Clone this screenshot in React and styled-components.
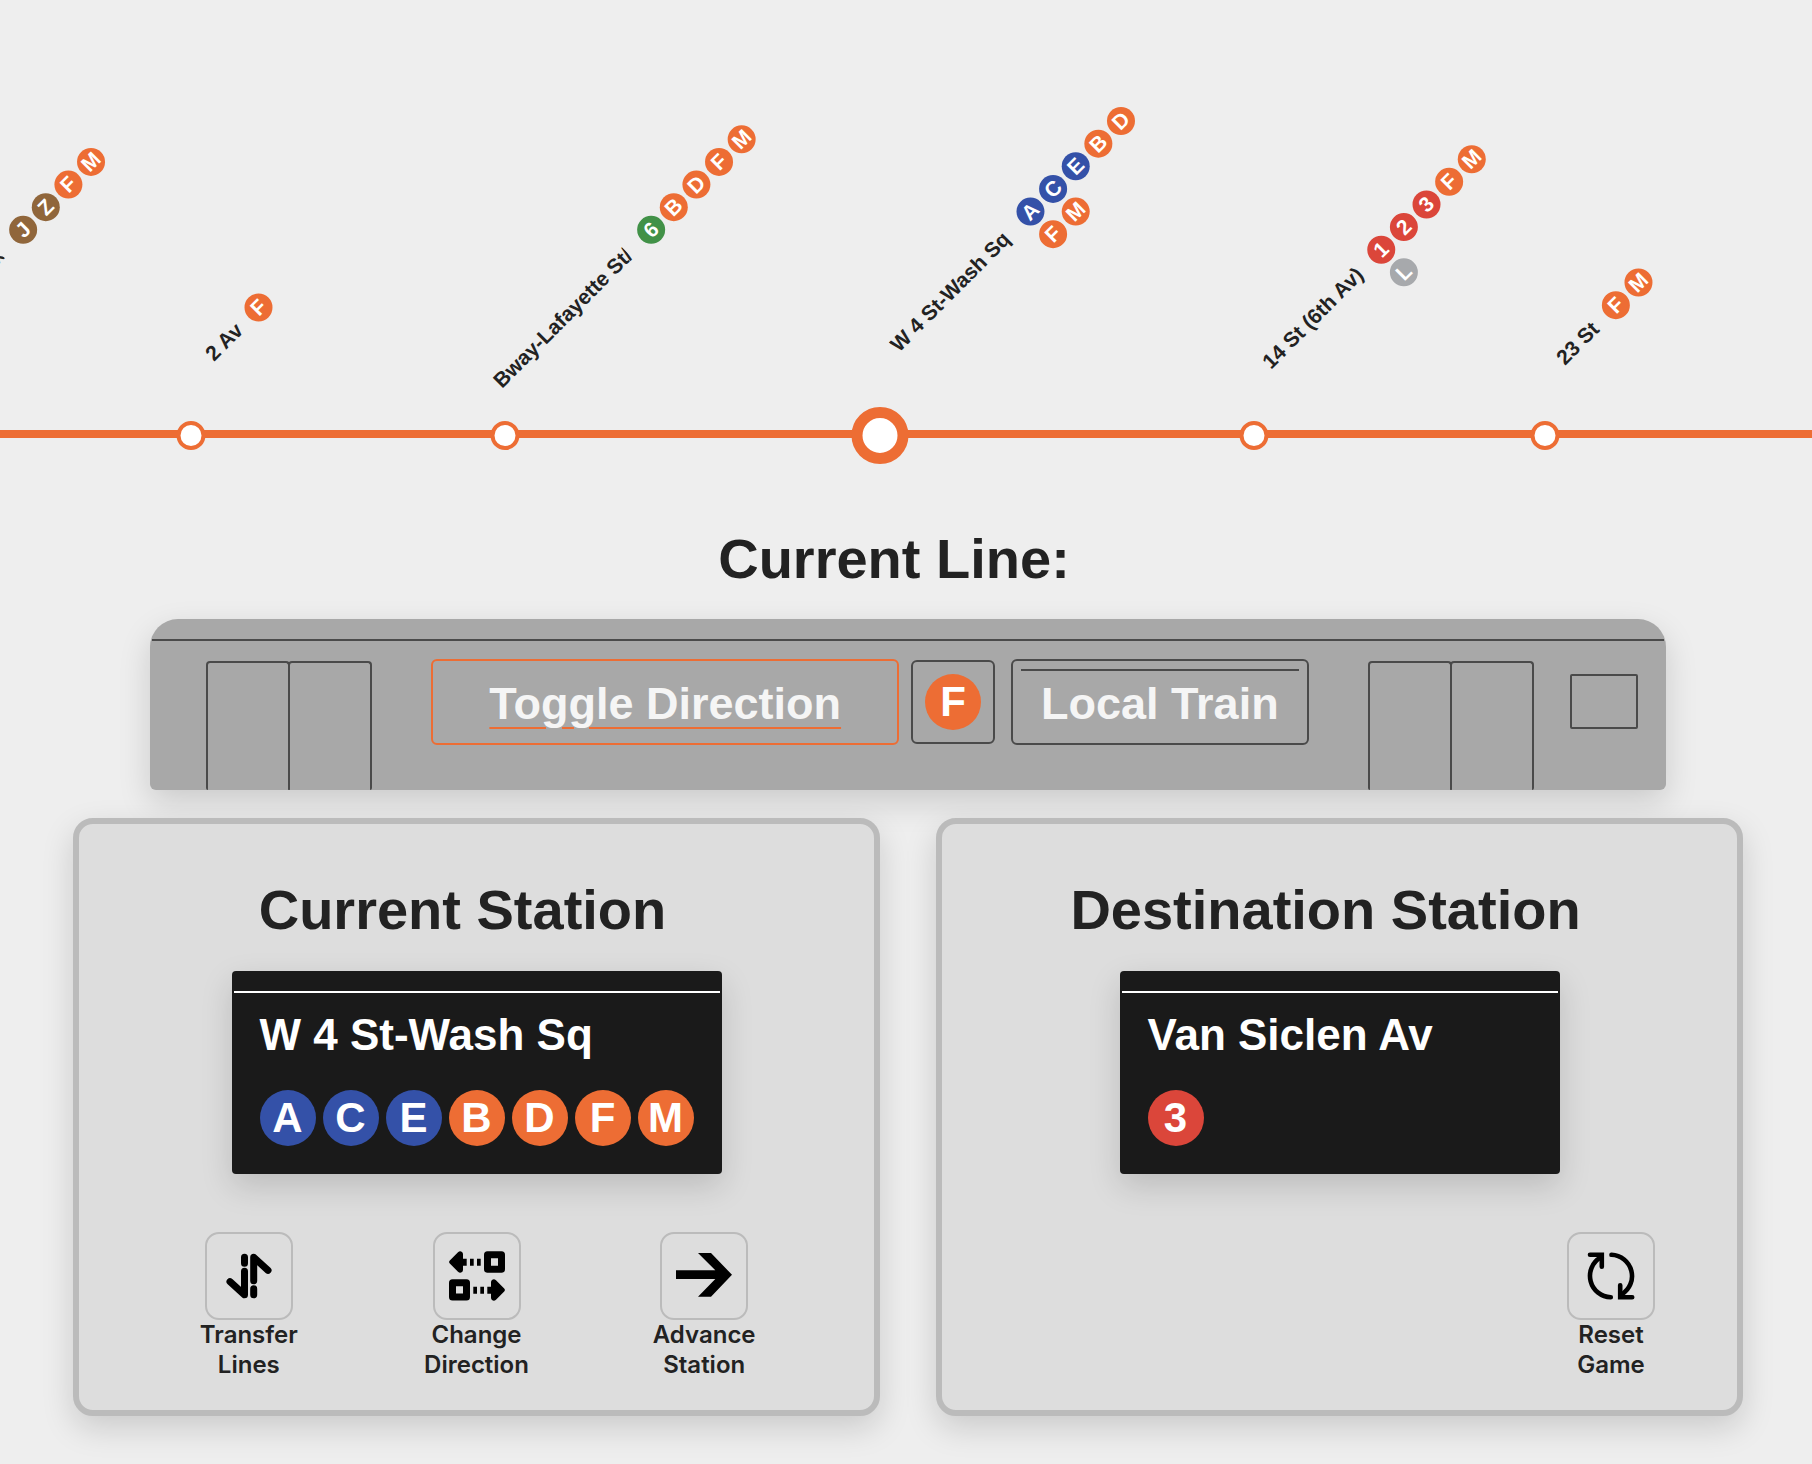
import React from "react";
import styled, { createGlobalStyle, css } from "styled-components";

const colors = {
  page: "#eeeeee",
  ink: "#222222",
  orange: "#ed6d34",
  blue: "#3451a8",
  red: "#db463a",
  green: "#419147",
  brown: "#90663b",
  grey: "#a7a9ac",
  steel: "#a8a8a8",
  seam: "#4a4a4a",
  panel: "#dddddd",
  edge: "#bbbbbb",
  sign: "#1a1a1a",
};

const routeColors = {
  1: colors.red, 2: colors.red, 3: colors.red,
  6: colors.green,
  A: colors.blue, C: colors.blue, E: colors.blue,
  B: colors.orange, D: colors.orange, F: colors.orange, M: colors.orange,
  J: colors.brown, Z: colors.brown,
  L: colors.grey,
};

// span: distance to the next stop; x / y: where the slanted label starts,
// measured from the stop's dot; reach: room for the name before its bullets.
const stops = [
  { name: "Delancey St-Essex", routes: "JZFM", span: 314, x: -8, y: -52, reach: 204 },
  { name: "2 Av", routes: "F", span: 314, x: 18, y: -79, reach: 56 },
  { name: "Bway-Lafayette St/", routes: "6BDFM", span: 375, x: -8, y: -52, reach: 204 },
  { name: "W 4 St-Wash Sq", routes: "ACEBDFM", span: 374, x: 14, y: -88, reach: 179, current: true },
  { name: "14 St (6th Av)", routes: "123FML", span: 291, x: 12, y: -71, reach: 149 },
  { name: "23 St", routes: "FM", span: 420, x: 15, y: -75, reach: 65 },
];

const GlobalStyle = createGlobalStyle`
  *, *::before, *::after { box-sizing: border-box; }
  body {
    margin: 0;
    background: ${colors.page};
    color: ${colors.ink};
    font-family: "Liberation Sans", Arial, sans-serif;
  }
`;

const shadow = css`
  box-shadow: 0 12px 32px rgba(0, 0, 0, 0.15);
`;

const Page = styled.main`
  padding-bottom: 48px;
`;

const LineMap = styled.section`
  overflow: hidden;
  padding-top: 407px;
`;

const Track = styled.div`
  position: relative;

  &::before {
    content: "";
    position: absolute;
    top: 23px;
    left: 0;
    width: 100%;
    height: 8px;
    background: ${colors.orange};
  }
`;

const StopList = styled.ol`
  display: flex;
  margin: 0 0 0 calc(50% - 1029px);
  padding: 0;
  list-style: none;
`;

const Stop = styled.li`
  position: relative;
  flex: 0 0 ${(p) => p.$span}px;
  display: flex;
  align-items: center;
  height: 57px;
`;

const Dot = styled.span`
  width: ${(p) => (p.$current ? 57 : 29)}px;
  height: ${(p) => (p.$current ? 57 : 29)}px;
  border: ${(p) => (p.$current ? 11 : 4)}px solid ${colors.orange};
  border-radius: 50%;
  background: #fff;
  transform: translateX(-50%);
`;

const StopLabel = styled.div`
  position: absolute;
  left: ${(p) => p.$x}px;
  top: calc(50% + ${(p) => p.$y - 14}px);
  display: flex;
  align-items: flex-start;
  height: 28px;
  transform: rotate(-45deg);
  transform-origin: 0 50%;
`;

const StopName = styled.div`
  width: ${(p) => p.$reach}px;
  max-width: 185px;
  margin-right: ${(p) => Math.max(0, p.$reach - 185)}px;
  overflow: hidden;
  font-size: 21px;
  font-weight: 700;
  line-height: 28px;
  white-space: nowrap;
`;

const Bullets = styled.div`
  display: ${(p) => (p.$small ? "grid" : "flex")};
  grid-template-columns: repeat(5, 28px);
  gap: ${(p) => (p.$small ? 4 : 7)}px;
`;

const Bullet = styled.span`
  flex: none;
  width: ${(p) => (p.$small ? 28 : 56)}px;
  height: ${(p) => (p.$small ? 28 : 56)}px;
  border-radius: 50%;
  background: ${(p) => routeColors[p.$route]};
  color: #fff;
  font-size: ${(p) => (p.$small ? 21 : 42)}px;
  font-weight: 700;
  line-height: ${(p) => (p.$small ? 28 : 56)}px;
  text-align: center;
`;

const Heading = styled.h2`
  margin: 0;
  padding-right: 28px;
  font-size: 56px;
  font-weight: 700;
  line-height: 66px;
  text-align: center;
`;

const LineSection = styled.section`
  padding: 62px 146px 0 150px;
`;

const Train = styled.div`
  margin-top: 27px;
  padding: 0 2px;
  border-radius: 28px 28px 6px 6px;
  background: ${colors.steel};
  ${shadow}
`;

const Roof = styled.div`
  height: 22px;
  border-bottom: 2px solid ${colors.seam};
`;

const CarSide = styled.div`
  display: flex;
  align-items: flex-start;
  height: 149px;
  padding: 0 26px 0 54px;
`;

const Doors = styled.div`
  display: flex;
  align-self: flex-end;
  width: 166px;
  height: 129px;
`;

const Door = styled.div`
  flex: 1;
  border: 2px solid ${colors.seam};
  border-bottom: 0;
  border-radius: 4px 4px 2px 2px;

  & + & {
    margin-left: -2px;
  }
`;

const CarSigns = styled.div`
  flex: 1;
  display: flex;
  align-items: center;
  justify-content: center;
  padding-top: 18px;
`;

const carText = css`
  height: 86px;
  border: 2px solid ${colors.seam};
  border-radius: 6px;
  color: #f5f5f5;
  font-family: inherit;
  font-size: 45px;
  font-weight: 700;
  line-height: 82px;
  white-space: nowrap;
`;

const ToggleButton = styled.button`
  ${carText}
  margin-right: 12px;
  padding: 2px 56px 0;
  border-color: ${colors.orange};
  background: transparent;
  text-decoration: underline 2px ${colors.orange};
  text-underline-offset: 8px;
  cursor: pointer;
`;

const RouteWindow = styled.div`
  margin-right: 16px;
  padding: 12px;
  border: 2px solid ${colors.seam};
  border-radius: 6px;
`;

const ServiceWindow = styled.div`
  ${carText}
  padding: 0 8px;

  &::before {
    content: "";
    display: block;
    height: 2px;
    margin: 8px 0 -8px;
    background: ${colors.seam};
  }
`;

const ServiceText = styled.span`
  padding: 0 20px;
`;

const CabWindow = styled.div`
  width: 68px;
  height: 55px;
  margin: 33px 0 0 36px;
  border: 2px solid ${colors.seam};
  border-radius: 2px;
`;

const Panels = styled.div`
  display: grid;
  grid-template-columns: 1fr 1fr;
  gap: 56px;
  padding: 28px 69px 0 73px;
`;

const Panel = styled.section`
  display: flex;
  flex-direction: column;
  align-items: center;
  padding: 53px 56px 30px;
  border: 6px solid ${colors.edge};
  border-radius: 20px;
  background: ${colors.panel};
  ${shadow}
`;

const Sign = styled.div`
  min-width: 440px;
  margin-top: 28px;
  padding: 0 2px 28px;
  border-radius: 4px;
  background: ${colors.sign};
  ${shadow}
`;

const SignRule = styled.div`
  height: 22px;
  border-bottom: 2px solid #fff;
`;

const SignBody = styled.div`
  padding: 17px 26px 0;
`;

const SignName = styled.div`
  margin-bottom: 30px;
  color: #fff;
  font-size: 44px;
  font-weight: 700;
  line-height: 50px;
  white-space: nowrap;
`;

const Actions = styled.div`
  align-self: stretch;
  display: flex;
  justify-content: ${(p) => (p.$end ? "flex-end" : "space-around")};
  margin-top: 58px;
`;

const ActionCell = styled.div`
  display: flex;
  flex: ${(p) => (p.$end ? "none" : 1)};
  justify-content: center;
  padding-right: ${(p) => (p.$end ? 14 : 0)}px;
`;

const ActionButton = styled.button`
  display: flex;
  flex-direction: column;
  align-items: center;
  width: 112px;
  padding: 0;
  border: 0;
  background: transparent;
  color: ${colors.ink};
  font-family: Inter, sans-serif;
  font-size: 24px;
  font-weight: 600;
  line-height: 30px;
  text-align: center;
  cursor: pointer;
`;

const IconFrame = styled.span`
  display: flex;
  align-items: center;
  justify-content: center;
  width: 88px;
  height: 88px;
  border: 2px solid ${colors.edge};
  border-radius: 14px;
`;

const Icon = ({ children }) => (
  <svg width="56" height="56" viewBox="0 0 56 56" aria-hidden="true">
    {children}
  </svg>
);

const TransferIcon = () => (
  <Icon>
    <g fill="none" stroke="#000" strokeWidth="7" strokeLinecap="round" strokeLinejoin="round">
      <path d="M23.5 9.2V15.2M23.5 23.2V46.8L9 33.7" />
      <path d="M32.7 46.8V40.8M32.7 32.8V9.2L47 22.4" />
    </g>
  </Icon>
);

const ChangeIcon = () => (
  <Icon>
    <path d="M.8 12.4L9 4.2Q11 2.6 13 4Q14 4.8 14 6.2V10.7H17.7V17.7H14V21.8Q14 23.2 13 24Q11 25.4 9 23.8L.8 15.6Q-.6 14 .8 12.4Z" />
    <path d="M21 10.7h3.7v7H21zM28 10.7h3.7v7H28z" />
    <rect x="38.5" y="6.8" width="14" height="14.4" fill="none" stroke="#000" strokeWidth="7" strokeLinejoin="round" />
    <rect x="3.5" y="34.8" width="14" height="14.2" fill="none" stroke="#000" strokeWidth="7" strokeLinejoin="round" />
    <path d="M24.3 38.7h3.7v7h-3.7zM31.3 38.7H35v7h-3.7z" />
    <path d="M55.2 40.4L47 32.2Q45 30.6 43 32Q42 32.8 42 34.2V38.7H38.3V45.7H42V49.8Q42 51.2 43 52Q45 53.4 47 51.8L55.2 43.6Q56.6 42 55.2 40.4Z" />
  </Icon>
);

const AdvanceIcon = () => (
  <Icon>
    <path d="M22 5H35L56 26.8L35 48.8H22L39.3 31H0V22.3H39.3Z" />
  </Icon>
);

const ResetIcon = () => (
  <Icon>
    <g fill="none" stroke="#000" strokeWidth="4.6" strokeLinecap="round">
      <path d="M7 6.8H18.8V18.8M49.2 49.2H37.2V37.2" />
      <path d="M28.5 6.8A21.3 21.3 0 0 1 38.6 46.4M27.8 49.2A21.3 21.3 0 0 1 17.4 9.6" />
    </g>
  </Icon>
);

const RouteBullets = ({ routes, small }) => (
  <Bullets $small={small}>
    {routes.split("").map((route) => (
      <Bullet key={route} $route={route} $small={small}>{route}</Bullet>
    ))}
  </Bullets>
);

const StationSign = ({ name, routes }) => (
  <Sign>
    <SignRule />
    <SignBody>
      <SignName>{name}</SignName>
      <RouteBullets routes={routes} />
    </SignBody>
  </Sign>
);

const Action = ({ icon, label, end }) => (
  <ActionCell $end={end}>
    <ActionButton type="button">
      <IconFrame>{icon}</IconFrame>
      <span>{label}</span>
    </ActionButton>
  </ActionCell>
);

const TrainDoors = () => (
  <Doors>
    <Door />
    <Door />
  </Doors>
);

export default function App() {
  return (
    <Page>
      <GlobalStyle />
      <LineMap>
        <Track>
          <StopList>
            {stops.map((stop) => (
              <Stop key={stop.name} $span={stop.span}>
                <Dot $current={stop.current} />
                <StopLabel $x={stop.x} $y={stop.y}>
                  <StopName $reach={stop.reach}>{stop.name}</StopName>
                  <RouteBullets routes={stop.routes} small />
                </StopLabel>
              </Stop>
            ))}
          </StopList>
        </Track>
      </LineMap>

      <LineSection>
        <Heading>Current Line:</Heading>
        <Train>
          <Roof />
          <CarSide>
            <TrainDoors />
            <CarSigns>
              <ToggleButton type="button">Toggle Direction</ToggleButton>
              <RouteWindow>
                <RouteBullets routes="F" />
              </RouteWindow>
              <ServiceWindow>
                <ServiceText>Local Train</ServiceText>
              </ServiceWindow>
            </CarSigns>
            <TrainDoors />
            <CabWindow />
          </CarSide>
        </Train>
      </LineSection>

      <Panels>
        <Panel>
          <Heading>Current Station</Heading>
          <StationSign name="W 4 St-Wash Sq" routes="ACEBDFM" />
          <Actions>
            <Action icon={<TransferIcon />} label="Transfer Lines" />
            <Action icon={<ChangeIcon />} label="Change Direction" />
            <Action icon={<AdvanceIcon />} label="Advance Station" />
          </Actions>
        </Panel>
        <Panel>
          <Heading>Destination Station</Heading>
          <StationSign name="Van Siclen Av" routes="3" />
          <Actions $end>
            <Action end icon={<ResetIcon />} label="Reset Game" />
          </Actions>
        </Panel>
      </Panels>
    </Page>
  );
}
